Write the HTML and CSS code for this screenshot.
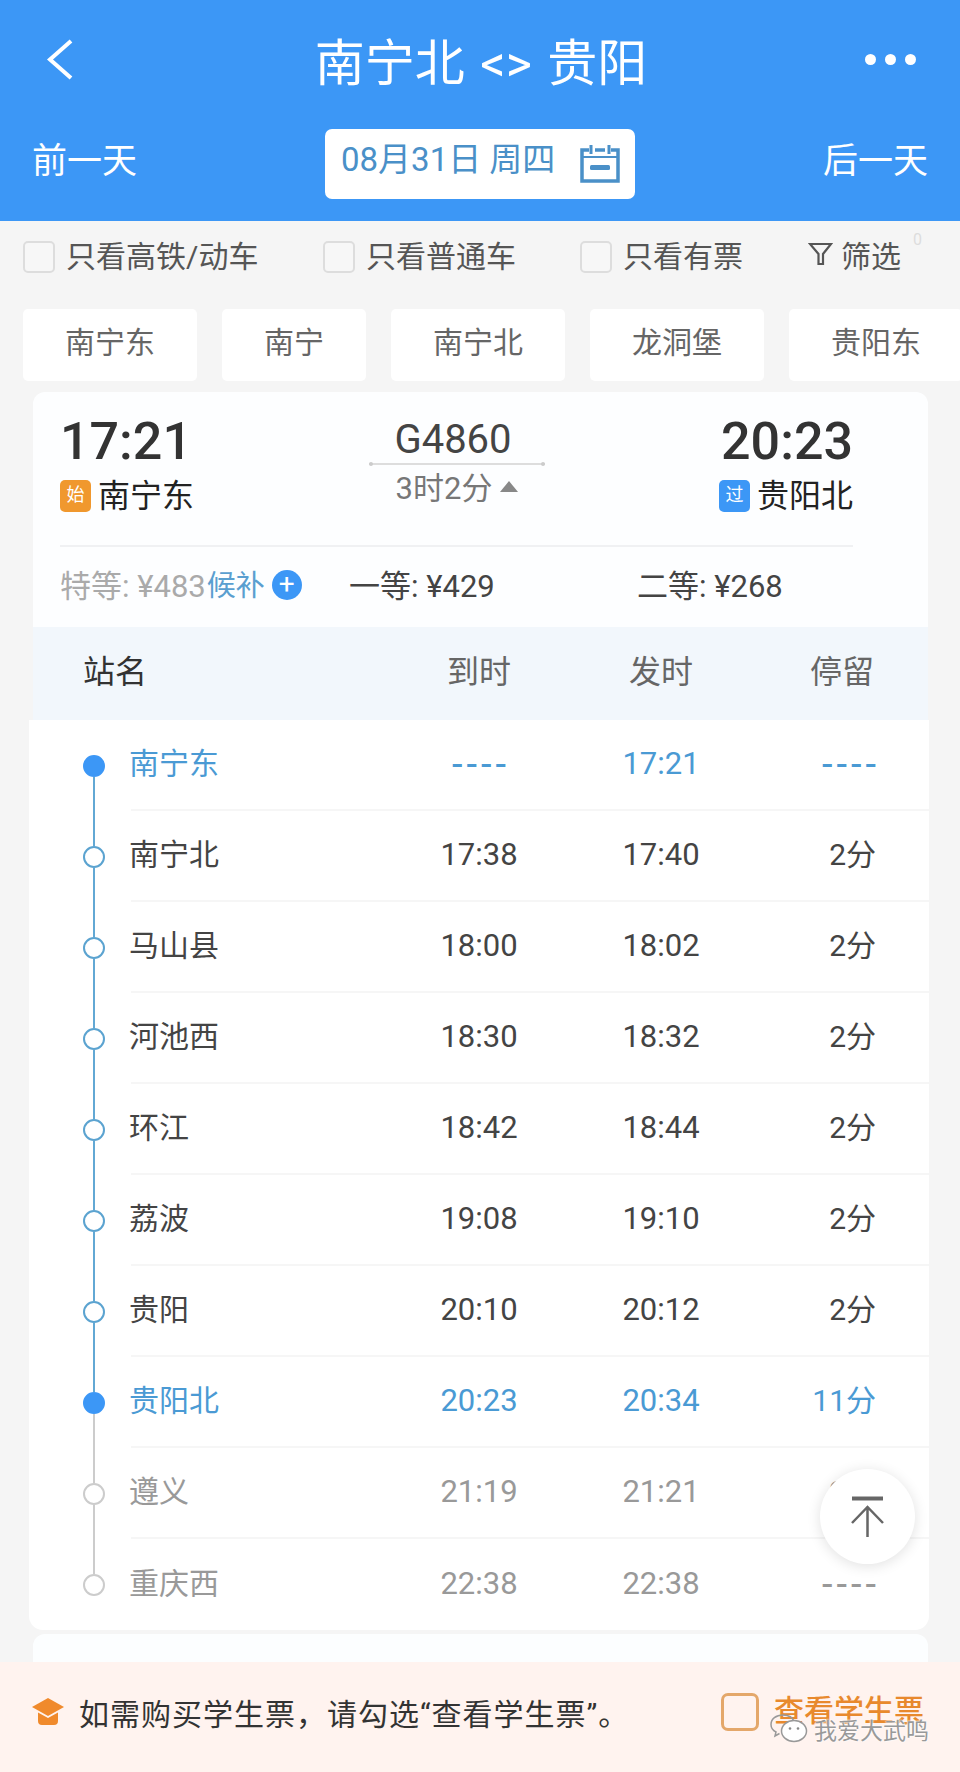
FILE: index.html
```html
<!DOCTYPE html>
<html lang="zh-CN">
<head>
    <meta charset="UTF-8">
    <meta name="viewport" content="width=device-width, initial-scale=1.0">
    <title>南宁北 - 贵阳</title>
    <link rel="stylesheet" href="styles.css">
</head>
<body>
<div class="page">

    <!-- Cabecera -->
    <header class="header">
        <div class="nav">
            <svg class="back" width="28" height="41" viewBox="0 0 28 41"><path d="M25 2 L4 20.5 L25 39" fill="none" stroke="#fff" stroke-width="4"/></svg>
            <div class="title">南宁北 &lt;&gt; 贵阳</div>
            <div class="more"><i></i><i></i><i></i></div>
        </div>
        <div class="days">
            <span class="day">前一天</span>
            <div class="date">
                <span>08月31日 周四</span>
                <svg width="40" height="38" viewBox="0 0 40 38"><path d="M9 5H2v31h36V5h-7M15 5h10" fill="none" stroke="#4a90c8" stroke-width="3.500"/><path d="M2 12H38" stroke="#4a90c8" stroke-width="2"/><path d="M11 0v9M29 0v9" stroke="#4a90c8" stroke-width="3"/><rect x="10" y="20" width="20" height="5" rx="1.500" fill="#4a90c8"/></svg>
            </div>
            <span class="day">后一天</span>
        </div>
    </header>

    <!-- Filtros -->
    <div class="filters">
        <label class="check check--wide"><i></i>只看高铁/动车</label>
        <label class="check check--mid"><i></i>只看普通车</label>
        <label class="check check--small"><i></i>只看有票</label>
        <div class="sift">
            <svg width="25" height="24" viewBox="0 0 25 24"><path d="M2 2H23L15 12V22H10.500V12Z" fill="none" stroke="#555" stroke-width="2.200"/></svg>
            筛选
            <span class="sift__num">0</span>
        </div>
    </div>

    <div class="chips">
        <span class="chip">南宁东</span>
        <span class="chip chip--short">南宁</span>
        <span class="chip">南宁北</span>
        <span class="chip">龙洞堡</span>
        <span class="chip">贵阳东</span>
    </div>

    <!-- Tren -->
    <section class="train">
        <div class="train__top">
            <div class="end">
                <div class="end__time">17:21</div>
                <div class="end__name"><span class="tag tag--start">始</span>南宁东</div>
            </div>
            <div class="mid">
                <div class="mid__code">G4860</div>
                <div class="mid__line"></div>
                <div class="mid__dur">3时2分<i class="up"></i></div>
            </div>
            <div class="end end--right">
                <div class="end__time">20:23</div>
                <div class="end__name"><span class="tag tag--pass">过</span>贵阳北</div>
            </div>
        </div>
        <div class="prices">
            <div class="price price--off">特等: ¥483<b>候补</b><span class="plus">+</span></div>
            <div class="price">一等: ¥429</div>
            <div class="price">二等: ¥268</div>
        </div>
    </section>

    <div class="thead">
        <span class="thead__name">站名</span>
        <span>到时</span>
        <span>发时</span>
        <span class="thead__stay">停留</span>
    </div>

    <!-- Paradas -->
    <section class="stops">
        <div class="stop stop--key stop--first">
            <div class="node"><i class="seg seg--top"></i><i class="dot"></i><i class="seg"></i></div>
            <div class="row"><span class="row__name">南宁东</span><span class="row__dash">----</span><span>17:21</span><span class="row__stay row__dash">----</span></div>
        </div>
        <div class="stop">
            <div class="node"><i class="seg seg--top"></i><i class="dot"></i><i class="seg"></i></div>
            <div class="row"><span class="row__name">南宁北</span><span>17:38</span><span>17:40</span><span class="row__stay">2分</span></div>
        </div>
        <div class="stop">
            <div class="node"><i class="seg seg--top"></i><i class="dot"></i><i class="seg"></i></div>
            <div class="row"><span class="row__name">马山县</span><span>18:00</span><span>18:02</span><span class="row__stay">2分</span></div>
        </div>
        <div class="stop">
            <div class="node"><i class="seg seg--top"></i><i class="dot"></i><i class="seg"></i></div>
            <div class="row"><span class="row__name">河池西</span><span>18:30</span><span>18:32</span><span class="row__stay">2分</span></div>
        </div>
        <div class="stop">
            <div class="node"><i class="seg seg--top"></i><i class="dot"></i><i class="seg"></i></div>
            <div class="row"><span class="row__name">环江</span><span>18:42</span><span>18:44</span><span class="row__stay">2分</span></div>
        </div>
        <div class="stop">
            <div class="node"><i class="seg seg--top"></i><i class="dot"></i><i class="seg"></i></div>
            <div class="row"><span class="row__name">荔波</span><span>19:08</span><span>19:10</span><span class="row__stay">2分</span></div>
        </div>
        <div class="stop">
            <div class="node"><i class="seg seg--top"></i><i class="dot"></i><i class="seg"></i></div>
            <div class="row"><span class="row__name">贵阳</span><span>20:10</span><span>20:12</span><span class="row__stay">2分</span></div>
        </div>
        <div class="stop stop--key stop--arrive">
            <div class="node"><i class="seg seg--top"></i><i class="dot"></i><i class="seg"></i></div>
            <div class="row"><span class="row__name">贵阳北</span><span>20:23</span><span>20:34</span><span class="row__stay">11分</span></div>
        </div>
        <div class="stop stop--after">
            <div class="node"><i class="seg seg--top"></i><i class="dot"></i><i class="seg"></i></div>
            <div class="row"><span class="row__name">遵义</span><span>21:19</span><span>21:21</span><span class="row__stay">2分</span></div>
        </div>
        <div class="stop stop--after stop--last">
            <div class="node"><i class="seg seg--top"></i><i class="dot"></i><i class="seg"></i></div>
            <div class="row"><span class="row__name">重庆西</span><span>22:38</span><span>22:38</span><span class="row__stay row__dash">----</span></div>
        </div>
    </section>

    <div class="next"></div>

    <!-- Volver arriba -->
    <div class="totop">
        <svg width="37" height="42" viewBox="0 0 37 42"><path d="M3 2.500H34" stroke="#666" stroke-width="4"/><path d="M18.500 41V11M3 27 18.500 11 34 27" fill="none" stroke="#666" stroke-width="2.500"/></svg>
    </div>

    <!-- Barra inferior -->
    <footer class="student">
        <svg class="student__cap" width="32" height="28" viewBox="0 0 32 28"><path d="M16 0 32 9 16 18 0 9Z" fill="#f08a2c"/><path d="M6 14.500 16 20 26 14.500V23Q26 27 22 27H10Q6 27 6 23Z" fill="#f08a2c"/></svg>
        <span class="student__text">如需购买学生票，请勾选“查看学生票”。</span>
        <i class="student__box"></i>
        <span class="student__link">查看学生票</span>
        <div class="mark">
            <svg width="38" height="30" viewBox="0 0 38 30"><path d="M13 1C6 1 1 5 1 10.500 1 14 3 16.500 6 18L5 22 9.500 19.500" fill="none" stroke="#999" stroke-width="1.500"/><path d="M13 1C19 1 23 4 24.500 8" fill="none" stroke="#999" stroke-width="1.500"/><ellipse cx="24" cy="17" rx="12.500" ry="10.500" fill="#fff" stroke="#999" stroke-width="1.500"/><circle cx="20" cy="14.500" r="1.300" fill="#888"/><circle cx="28" cy="14.500" r="1.300" fill="#888"/></svg>
            <span>我爱大武鸣</span>
        </div>
    </footer>

</div>
</body>
</html>
```

FILE: styles.css
```css
* {
    box-sizing: border-box;
}
body {
    margin: 0;
    font-family: Roboto, "Noto Sans CJK SC", sans-serif;
    background-color: #f5f5f5;
    color: #333;
}

.page {
    position: relative;
    width: 960px;
    height: 1772px;
    overflow: hidden;
}

/* Cabecera */
.header {
    height: 221px;
    background-color: #3c97f6;
    color: #fff;
}

.nav {
    height: 129px;
    padding: 0 44px 11px 46px;
    display: grid;
    grid-template-columns: 1fr auto 1fr;
    align-items: center;
}

.title {
    font-size: 50px;
    word-spacing: 3px;
    white-space: nowrap;
}

.more {
    width: 51px;
    justify-self: end;
    display: flex;
    justify-content: space-between;
}

.more i {
    width: 11px;
    height: 11px;
    border-radius: 50%;
    background-color: #fff;
}

.days {
    padding: 0 32px;
    display: flex;
    justify-content: space-between;
    align-items: center;
}

.day {
    margin-top: -4px;
    font-size: 35px;
    line-height: 70px;
}

.date {
    width: 310px;
    height: 70px;
    padding: 0 15px 0 16px;
    border-radius: 7px;
    background-color: #fff;
    color: #4a90c8;
    font-size: 33px;
    display: flex;
    justify-content: space-between;
    align-items: center;
}

.date span {
    margin-bottom: 8px;
    line-height: 44px;
    white-space: nowrap;
}

/* Filtros */
.filters {
    height: 88px;
    padding: 0 0 22px 23px;
    display: flex;
    align-items: center;
    font-size: 30px;
    color: #555;
}

.check {
    display: flex;
    align-items: center;
    gap: 11px;
    white-space: nowrap;
}

.check i {
    width: 32px;
    height: 32px;
    margin-top: 6px;
    border: 2px solid #ddd;
    border-radius: 5px;
    background-color: #f7f7f7;
}

.check--wide {
    width: 300px;
}

.check--mid {
    width: 257px;
}

.check--small {
    width: 228px;
}

.sift {
    position: relative;
    display: flex;
    align-items: center;
    gap: 8px;
    white-space: nowrap;
}

.sift__num {
    position: absolute;
    left: 105px;
    top: -2px;
    font-size: 16px;
    color: #ddd;
}

.chips {
    padding-left: 23px;
    display: flex;
    gap: 25px;
}

.chip {
    flex: 0 0 174px;
    height: 72px;
    border-radius: 5px;
    background-color: #fff;
    color: #666;
    font-size: 30px;
    text-align: center;
    line-height: 68px;
}

.chip--short {
    flex-basis: 144px;
}

/* Tren */
.train {
    width: 895px;
    height: 235px;
    margin: 11px 0 0 33px;
    padding: 0 75px 0 27px;
    border-radius: 12px 12px 0 0;
    background-color: #fdfeff;
}

.train__top {
    height: 155px;
    border-bottom: 2px solid #f0f1f3;
    display: grid;
    grid-template-columns: 309px 176px 1fr;
}

.end__time {
    margin-top: 20px;
    font-size: 52px;
    font-weight: 500;
    line-height: 60px;
    color: #333;
}

.end--right {
    text-align: right;
}

.end__name {
    margin-top: 1px;
    font-size: 32px;
    line-height: 46px;
    color: #222;
    display: flex;
    align-items: center;
    gap: 7px;
}

.end--right .end__name {
    justify-content: flex-end;
}

.tag {
    width: 31px;
    height: 32px;
    border-radius: 5px;
    color: #fff;
    font-size: 18px;
    line-height: 30px;
    text-align: center;
}

.tag--start {
    background-color: #f0982e;
}

.tag--pass {
    background-color: #3c97f6;
}

.mid {
    text-align: center;
}

.mid__code {
    margin: 25px 8px 0 0;
    font-size: 40px;
    line-height: 46px;
    color: #444;
}

.mid__line {
    position: relative;
    height: 2px;
    background-color: #ddd;
}

.mid__line::before,
.mid__line::after {
    content: "";
    position: absolute;
    top: -1px;
    width: 4px;
    height: 4px;
    border-radius: 50%;
    background-color: #ccc;
}

.mid__line::before {
    left: 0;
}

.mid__line::after {
    right: 0;
}

.mid__dur {
    margin-top: 6px;
    font-size: 31px;
    line-height: 36px;
    color: #777;
    display: flex;
    align-items: center;
    justify-content: center;
    gap: 8px;
}

.up {
    border-left: 9px solid transparent;
    border-right: 9px solid transparent;
    border-bottom: 11px solid #888;
    margin-top: -6px;
}

.prices {
    width: 860px;
    height: 80px;
    padding-bottom: 8px;
    font-size: 31px;
    color: #444;
    display: grid;
    grid-template-columns: 289px 288px 1fr;
    align-items: center;
}

.price {
    white-space: nowrap;
    display: flex;
    align-items: center;
}

.price--off {
    color: #aaa;
}

.price b {
    font-weight: 400;
    font-size: 29px;
    color: #5a9fd0;
    margin-left: 1px;
}

.plus {
    width: 30px;
    height: 30px;
    margin: 4px 0 0 7px;
    border-radius: 50%;
    background-color: #3c97f6;
    color: #fff;
    font-size: 28px;
    line-height: 28px;
    text-align: center;
}

.thead,
.row {
    display: grid;
    grid-template-columns: 206px 80px 80px 73px;
    column-gap: 102px;
    align-items: center;
    text-align: center;
    white-space: nowrap;
}

.thead {
    width: 895px;
    height: 93px;
    margin-left: 33px;
    padding: 0 0 10px 50px;
    grid-template-columns: 254px 80px 80px 71px;
    background-color: #f2f7fc;
    color: #666;
    font-size: 32px;
}

.thead__name {
    text-align: left;
    color: #333;
}

.thead__stay {
    text-align: right;
}

/* Paradas */
.stops {
    width: 900px;
    margin-left: 29px;
    border-radius: 0 0 14px 14px;
    background-color: #fff;
}

.stop {
    height: 91px;
    display: flex;
    color: #444;
}

.node {
    width: 102px;
    padding-left: 28px;
    display: flex;
    flex-direction: column;
    align-items: center;
}

.seg {
    flex: 1;
    width: 2px;
    background-color: #62a8d4;
}

.dot {
    flex: none;
    width: 22px;
    height: 22px;
    border: 2px solid #5ba3d0;
    border-radius: 50%;
    background-color: #fff;
}

.row {
    flex: 1;
    padding-bottom: 2px;
    font-size: 31px;
    border-bottom: 2px solid #f6f6f6;
}

.row__name {
    margin-left: -2px;
    padding-bottom: 6px;
    font-size: 30px;
    text-align: left;
}

.row__stay {
    padding-bottom: 6px;
    font-size: 30px;
    text-align: right;
}

.row__dash {
    padding-bottom: 0;
    font-size: 38px;
    line-height: 1;
    letter-spacing: 4px;
    margin-right: -4px;
}

.stop--key .row {
    color: #4a9ad4;
}

.stop--key .dot {
    background-color: #3c97f6;
    border-color: #3c97f6;
}

.stop--first .seg--top {
    visibility: hidden;
}

.stop--arrive .seg:last-child,
.stop--after .seg {
    background-color: #ccc;
}

.stop--after .row {
    color: #999;
}

.stop--after .dot {
    border-color: #ccc;
}

.stop--last .seg:last-child {
    visibility: hidden;
}

.stop--last .row {
    border-bottom: none;
}

.next {
    width: 895px;
    height: 60px;
    margin: 4px 0 0 33px;
    border-radius: 12px 12px 0 0;
    background-color: #fcfeff;
}

/* Encima del contenido */
.totop {
    position: absolute;
    left: 820px;
    top: 1469px;
    width: 95px;
    height: 95px;
    border-radius: 50%;
    background-color: #fff;
    box-shadow: 0 2px 14px rgba(0,0,0,0.12);
    display: flex;
    align-items: center;
    justify-content: center;
}

.student {
    position: absolute;
    left: 0;
    right: 0;
    bottom: 0;
    height: 110px;
    padding: 0 0 10px 32px;
    background-color: #fff3ef;
    display: flex;
    align-items: center;
}

.student__text {
    width: 642px;
    margin-left: 15px;
    font-size: 30px;
    letter-spacing: 1px;
    color: #333;
    white-space: nowrap;
}

.student__box {
    width: 38px;
    height: 38px;
    border: 3px solid #e4a76a;
    border-radius: 7px;
}

.student__link {
    margin: -8px 0 0 15px;
    font-size: 30px;
    font-weight: 500;
    color: #e8892d;
    white-space: nowrap;
}

.mark {
    position: absolute;
    left: 770px;
    top: 50px;
    display: flex;
    align-items: center;
    gap: 6px;
    color: #999;
    font-size: 23px;
    text-shadow: 0 0 2px #fff, 0 0 2px #fff;
    white-space: nowrap;
}
```
